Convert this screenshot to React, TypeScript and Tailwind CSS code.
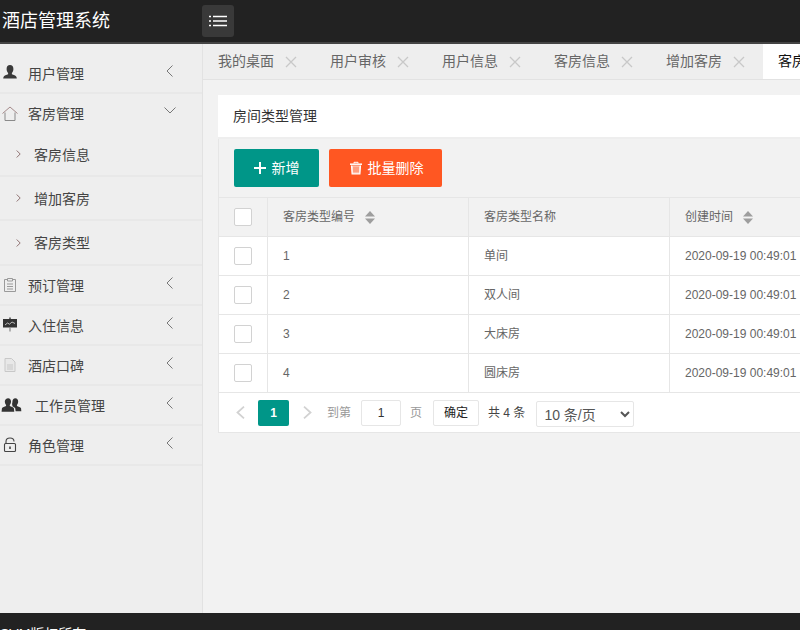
import type { ReactNode } from "react";

const iconClass = "w-[18px] h-[18px]";

const UserIcon = () => (
  <svg viewBox="0 0 18 18" className={iconClass}>
    <path d="M9 1c2.2 0 3.4 1.6 3.4 3.9 0 1.7-.7 3.2-1.500 4.100v1.300c1.600.7 4.100 1.300 4.600 2.700l.3 1.600H2.200l.3-1.600c.5-1.400 3-2 4.600-2.700V9c-.8-.9-1.500-2.400-1.500-4.100C5.600 2.600 6.800 1 9 1z" fill="#3a3a3a" />
  </svg>
);

const HouseIcon = () => (
  <svg viewBox="0 0 18 18" className={iconClass} fill="none" stroke="#8a8a8a" strokeWidth="1">
    <path d="M1.500 8.500 9 2l7.500 6.500" stroke="#a58a8a" />
    <path d="M4 7.500V15.500h10V7.500" />
  </svg>
);

const ClipboardIcon = () => (
  <svg viewBox="0 0 18 18" className={iconClass} fill="none" stroke="#9a9a9a" strokeWidth="1">
    <path d="M6 3.500H3.500v12h11v-12H12" />
    <path d="M6.500 2.500h5v2.500h-5z" />
    <path d="M6 8h6M6 10.500h6M6 13h6" />
  </svg>
);

const BoardIcon = () => (
  <svg viewBox="0 0 18 18" className={iconClass}>
    <path d="M9 1.500v2" stroke="#444" strokeWidth="1.500" />
    <rect x="2" y="3" width="14" height="8.500" fill="#333" />
    <path d="M4 9l2.500-2 2 1.200L11 6l3 1.500" stroke="#ddd" strokeWidth="0.800" fill="none" />
    <path d="M9 11.500v4" stroke="#888" strokeWidth="1.200" />
  </svg>
);

const DocIcon = () => (
  <svg viewBox="0 0 18 18" className={iconClass} fill="none" stroke="#c8c8c8" strokeWidth="1">
    <path d="M4 2.500h6.500L14 6v9.500H4z" fill="#e8e8e8" />
    <path d="M6 9h6M6 11h6M6 13h6" />
  </svg>
);

const TeamIcon = () => (
  <svg viewBox="0 0 22 18" className="w-[21px] h-[18px] shrink-0 ml-[3px]">
    <path d="M15 2c1.900 0 3 1.400 3 3.400 0 1.400-.6 2.700-1.300 3.500v1.200c1.400.6 3.800 1.200 4.300 2.400l.3 3h-6l-.4-3c-.5-1-1.700-1.700-3-2.300V8.900C11.200 8.100 12 6.800 12 5.400 12 3.400 13.100 2 15 2z" fill="#333" />
    <path d="M7.500 2c1.900 0 3 1.400 3 3.400 0 1.400-.6 2.700-1.300 3.500v1.200c1.400.6 3.800 1.200 4.300 2.400l.4 3.500H.6l.4-3.500c.5-1.200 2.900-1.800 4.300-2.400V8.900C4.600 8.100 4 6.800 4 5.400 4 3.400 5.600 2 7.500 2z" fill="#333" />
  </svg>
);

const LockIcon = () => (
  <svg viewBox="0 0 18 18" className={iconClass} fill="none" stroke="#444" strokeWidth="1.100">
    <path d="M5 7.500V5.500C5 3.300 6.800 2 9 2s4 1.300 4 3.500" />
    <rect x="3.500" y="7.500" width="11" height="8" rx="1" />
    <path d="M9 10.500v2.500" strokeWidth="1.600" />
  </svg>
);

const TrashIcon = () => (
  <svg viewBox="0 0 14 14" className="w-[14px] h-[14px]" fill="none" stroke="#ffffff">
    <path d="M1 3.200h12" strokeWidth="1.500" />
    <path d="M5 2.500V1.300h4v1.200" strokeWidth="1" />
    <path d="M2.500 4.500l.6 8.500h7.800l.6-8.500" strokeWidth="1.200" fill="#ffd9cc" />
    <path d="M5 5.500v6M7 5.500v6M9 5.500v6" stroke="#ff5722" strokeWidth="0.900" />
  </svg>
);

const SortIcon = () => (
  <svg viewBox="0 0 10 13" className="w-[10px] h-[13px] ml-[10px]" fill="#9e9e9e">
    <path d="M5 0l5 5.500H0z" />
    <path d="M5 13l5-5.500H0z" />
  </svg>
);

const CloseIcon = () => (
  <svg viewBox="0 0 12 12" className="w-[12px] h-[12px] ml-[11px]" stroke="#c8c8c8" strokeWidth="1.300">
    <path d="M1 1l10 10M11 1L1 11" />
  </svg>
);

const PlusIcon = () => (
  <svg viewBox="0 0 12 12" className="w-[12px] h-[12px]" fill="#ffffff">
    <path d="M5 0h2v5h5v2H7v5H5V7H0V5h5z" />
  </svg>
);

const NavChevronLeft = () => (
  <svg viewBox="0 0 7 12" className="w-[7px] h-[12px] mr-[29px] mb-[5px]" fill="none" stroke="#777" strokeWidth="1">
    <path d="M6.500.5 1 6l5.500 5.500" />
  </svg>
);

const NavChevronDown = () => (
  <svg viewBox="0 0 12 7" className="w-[12px] h-[7px] mr-[26px] mb-[6px]" fill="none" stroke="#777" strokeWidth="1">
    <path d="M.5.500 6 6l5.500-5.500" />
  </svg>
);

const SubChevron = () => (
  <svg viewBox="0 0 5 8" className="w-[5px] h-[8px] mr-[13px]" fill="none" stroke="#8f7272" strokeWidth="1">
    <path d="M.7.500 4.200 4 .7 7.500" />
  </svg>
);

const PageChevronLeft = () => (
  <svg viewBox="0 0 9 13" className="w-[9px] h-[13px]" fill="none" stroke="#d2d2d2" strokeWidth="1.800">
    <path d="M8 .7 1.500 6.500 8 12.300" />
  </svg>
);

const PageChevronRight = () => (
  <svg viewBox="0 0 9 13" className="w-[9px] h-[13px]" fill="none" stroke="#d2d2d2" strokeWidth="1.800">
    <path d="M1 .7l6.500 5.800L1 12.300" />
  </svg>
);

const Checkbox = () => (
  <span className="block w-[18px] h-[18px] bg-white border border-[#d2d2d2] rounded-[2px]" />
);

function NavItem({ icon, label, labelClass = "ml-[9px]", open = false, first = false }: {
  icon: ReactNode;
  label: string;
  labelClass?: string;
  open?: boolean;
  first?: boolean;
}) {
  return (
    <div className={`flex items-center pl-[1px] text-[14px] text-[#444] ${first ? "h-[50px] pt-[10px] border-b-2 border-[#e8e8e8]" : open ? "h-[39px]" : "h-[40px] border-b-2 border-[#e8e8e8]"}`}>
      <span className="w-[18px] flex justify-center shrink-0">{icon}</span>
      <span className={`pt-[2px] ${labelClass}`}>{label}</span>
      <span className="flex-1" />
      {open ? <NavChevronDown /> : <NavChevronLeft />}
    </div>
  );
}

function SubItem({ label, last = false }: { label: string; last?: boolean }) {
  return (
    <div className={`flex items-center pl-[16px] text-[14px] text-[#444] border-b-2 border-[#e8e8e8] ${last ? "h-[45px]" : "h-[44px]"}`}>
      <SubChevron />
      <span className="pt-[2px]">{label}</span>
    </div>
  );
}

function Tab({ label, active = false }: { label: string; active?: boolean }) {
  if (active) {
    return (
      <div className="flex items-center h-full bg-white pl-[15px] w-[112px] shrink-0 text-[14px] text-[#111] whitespace-nowrap">{label}</div>
    );
  }
  return (
    <div className="flex items-center h-full pl-[15px] w-[112px] shrink-0 text-[14px] text-[#666] whitespace-nowrap">
      {label}
      <CloseIcon />
    </div>
  );
}

const rows = [
  { id: "1", name: "单间", time: "2020-09-19 00:49:01" },
  { id: "2", name: "双人间", time: "2020-09-19 00:49:01" },
  { id: "3", name: "大床房", time: "2020-09-19 00:49:01" },
  { id: "4", name: "圆床房", time: "2020-09-19 00:49:01" },
];

export default function App() {
  return (
    <div className="w-[800px] h-[630px] overflow-hidden flex flex-col bg-[#f2f2f2] font-['Liberation_Sans','Noto_Sans_CJK_SC',sans-serif]">
      <header className="h-[44px] shrink-0 flex items-center bg-[#222222] border-b-2 border-[#444]">
        <div className="w-[202px] pl-[2px] text-[18px] text-white whitespace-nowrap">酒店管理系统</div>
        <div className="w-[32px] h-[32px] rounded-[3px] bg-[#393939] flex items-center justify-center">
          <svg viewBox="0 0 18 12" className="w-[18px] h-[12px]" stroke="#ffffff" strokeWidth="1.500">
            <path d="M0 1.500h2M4 1.500h14M0 6h2M4 6h14M0 10.500h2M4 10.500h14" />
          </svg>
        </div>
      </header>

      <div className="flex-1 flex min-h-0">
        <aside className="w-[203px] shrink-0 bg-[#eeeeee] border-r border-[#e2e2e2]">
          <NavItem icon={<UserIcon />} label="用户管理" first />
          <NavItem icon={<HouseIcon />} label="客房管理" open />
          <SubItem label="客房信息" />
          <SubItem label="增加客房" />
          <SubItem label="客房类型" last />
          <NavItem icon={<ClipboardIcon />} label="预订管理" />
          <NavItem icon={<BoardIcon />} label="入住信息" />
          <NavItem icon={<DocIcon />} label="酒店口碑" />
          <NavItem icon={<TeamIcon />} label="工作员管理" labelClass="ml-[16px]" />
          <NavItem icon={<LockIcon />} label="角色管理" />
        </aside>

        <main className="flex-1 min-w-0 overflow-hidden">
          <div className="h-[36px] flex bg-[#eeeeee] border-b border-[#e2e2e2] overflow-hidden">
            <Tab label="我的桌面" />
            <Tab label="用户审核" />
            <Tab label="用户信息" />
            <Tab label="客房信息" />
            <Tab label="增加客房" />
            <Tab label="客房类型" active />
          </div>

          <div className="ml-[15px] mt-[15px] w-[640px]">
            <div className="h-[44px] flex items-center bg-white pl-[15px] text-[14px] text-[#333] border-b-2 border-[#eeeeee]">房间类型管理</div>

            <div className="h-[59px] flex items-center pl-[15px] gap-[10px] border-l border-b border-[#e6e6e6]">
              <button className="w-[85px] h-[38px] rounded-[2px] bg-[#009688] text-white text-[14px] flex items-center justify-center gap-[6px]">
                <PlusIcon />
                新增
              </button>
              <button className="w-[113px] h-[38px] rounded-[2px] bg-[#ff5722] text-white text-[14px] flex items-center justify-center gap-[5px] pl-[1px]">
                <TrashIcon />
                批量删除
              </button>
            </div>

            <div className="grid grid-cols-[49px_201px_201px_200px] text-[12px] text-[#666] border-l border-[#e6e6e6]">
              <div className="h-[39px] flex items-center pl-[15px] border-b border-r border-[#e6e6e6]">
                <Checkbox />
              </div>
              <div className="h-[39px] flex items-center pl-[15px] border-b border-r border-[#e6e6e6]">
                客房类型编号<SortIcon />
              </div>
              <div className="h-[39px] flex items-center pl-[15px] border-b border-r border-[#e6e6e6]">客房类型名称</div>
              <div className="h-[39px] flex items-center pl-[15px] border-b border-[#e6e6e6]">
                创建时间<SortIcon />
              </div>

              {rows.map((r) => (
                <div key={r.id} className="contents">
                  <div className="h-[39px] flex items-center pl-[15px] bg-white border-b border-r border-[#e6e6e6]">
                    <Checkbox />
                  </div>
                  <div className="h-[39px] flex items-center pl-[15px] bg-white border-b border-r border-[#e6e6e6]">{r.id}</div>
                  <div className="h-[39px] flex items-center pl-[15px] bg-white border-b border-r border-[#e6e6e6]">{r.name}</div>
                  <div className="h-[39px] flex items-center pl-[15px] bg-white border-b border-[#e6e6e6] whitespace-nowrap">{r.time}</div>
                </div>
              ))}
            </div>

            <div className="h-[40px] flex items-center bg-white border-l border-b border-[#e6e6e6] text-[12px] text-[#999]">
              <span className="ml-[17px]"><PageChevronLeft /></span>
              <span className="ml-[13px] w-[31px] h-[26px] rounded-[2px] bg-[#009688] text-white flex items-center justify-center font-bold">1</span>
              <span className="ml-[14px]"><PageChevronRight /></span>
              <span className="ml-[15px]">到第</span>
              <span className="ml-[10px] w-[40px] h-[26px] rounded-[2px] border border-[#e6e6e6] text-[#333] flex items-center justify-center">1</span>
              <span className="ml-[9px]">页</span>
              <span className="ml-[11px] w-[46px] h-[26px] rounded-[2px] border border-[#e6e6e6] text-[#222] flex items-center justify-center">确定</span>
              <span className="ml-[9px] text-[#444]">共 4 条</span>
              <select className="ml-[11px] mt-[2px] w-[98px] h-[26px] bg-white border border-[#e6e6e6] rounded-[2px] text-[14px] text-[#555] pl-[3px] pt-[2px]" defaultValue="10">
                <option value="10">10 条/页</option>
                <option value="20">20 条/页</option>
              </select>
            </div>
          </div>
        </main>
      </div>

      <footer className="h-[17px] shrink-0 bg-[#222222] text-white text-[14px] leading-[20px] pt-[11px] whitespace-nowrap">SVM版权所有</footer>
    </div>
  );
}
